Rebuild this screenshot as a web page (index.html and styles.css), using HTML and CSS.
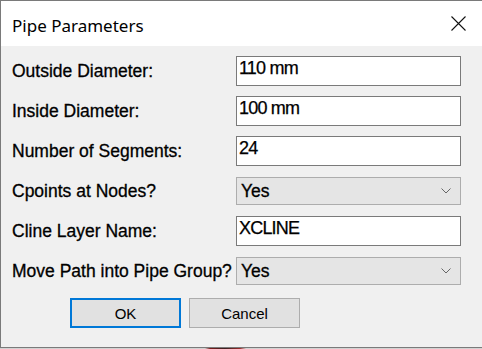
FILE: index.html
```html
<!DOCTYPE html>
<html lang="en">

<head>
    <meta charset="UTF-8">
    <meta name="viewport" content="width=device-width, initial-scale=1.0">
    <title>Pipe Parameters</title>
    <link rel="stylesheet" href="styles.css">
</head>

<body>
    <div class="window">
        <div class="titlebar">
            <span class="title">Pipe Parameters</span>
            <svg class="close" width="15" height="15" viewBox="0 0 15 15">
                <path d="M0.5 0.5 L14.5 14.5 M14.5 0.5 L0.5 14.5" stroke="#111" stroke-width="1.1" fill="none" />
            </svg>
        </div>
        <div class="content">
            <div class="form">
                <label>Outside Diameter:</label>
                <input class="field" type="text" value="110 mm">

                <label>Inside Diameter:</label>
                <input class="field" type="text" value="100 mm">

                <label>Number of Segments:</label>
                <input class="field" type="text" value="24">

                <label>Cpoints at Nodes?</label>
                <div class="combo">
                    <span>Yes</span>
                    <svg width="10" height="6" viewBox="0 0 10 6">
                        <path d="M0.5 0.5 L5 5 L9.5 0.5" stroke="#666" stroke-width="1" fill="none" />
                    </svg>
                </div>

                <label>Cline Layer Name:</label>
                <input class="field" type="text" value="XCLINE">

                <label>Move Path into Pipe Group?</label>
                <div class="combo">
                    <span>Yes</span>
                    <svg width="10" height="6" viewBox="0 0 10 6">
                        <path d="M0.5 0.5 L5 5 L9.5 0.5" stroke="#666" stroke-width="1" fill="none" />
                    </svg>
                </div>
            </div>
            <div class="buttons">
                <button class="btn btn-default">OK</button>
                <button class="btn">Cancel</button>
            </div>
        </div>
    </div>
    <div class="desk"></div>
</body>

</html>
```

FILE: styles.css
```css
body {
    margin: 0;
    background-color: #d2d2d2;
    font-family: "Liberation Sans", Arial, sans-serif;
}

.window {
    width: 481px;
    height: 346px;
    border: 1px solid #7a7a7a;
    border-right: 0;
    background-color: #f0f0f0;
    display: flex;
    flex-direction: column;
}

.titlebar {
    height: 45px;
    flex-shrink: 0;
    background-color: #fff;
    display: flex;
    align-items: center;
    justify-content: space-between;
    padding: 0 16px 0 11px;
}

.title {
    font-family: "Noto Sans", "Open Sans", sans-serif;
    font-size: 17px;
    color: #000;
    padding-top: 3px;
}

.close {
    display: block;
}

.content {
    padding: 10px 0 0 11px;
}

.form {
    display: grid;
    grid-template-columns: 224px 225px;
    grid-auto-rows: 30px;
    row-gap: 10px;
    align-items: center;
}

.form label {
    font-size: 17.5px;
    color: #000;
    -webkit-text-stroke: 0.3px #000;
}

.field {
    box-sizing: border-box;
    width: 225px;
    height: 30px;
    margin: 0;
    border: 1px solid #7a7a7a;
    background-color: #fff;
    padding: 0 2px 5px;
    font-family: "Liberation Sans", Arial, sans-serif;
    font-size: 18px;
    letter-spacing: -0.8px;
    color: #000;
    -webkit-text-stroke: 0.25px #000;
    outline: none;
}

.combo {
    box-sizing: border-box;
    height: 28px;
    border: 1px solid #adadad;
    background-color: #e5e5e5;
    display: flex;
    align-items: center;
    justify-content: space-between;
    padding: 0 9px 0 4px;
    font-size: 17.5px;
    color: #000;
    -webkit-text-stroke: 0.3px #000;
}

.combo svg {
    display: block;
}

.buttons {
    display: flex;
    gap: 8px;
    margin-top: 12px;
    padding-left: 58px;
}

.btn {
    box-sizing: border-box;
    width: 111px;
    height: 30px;
    margin: 0;
    border: 1px solid #adadad;
    background-color: #e1e1e1;
    font-family: "Liberation Sans", Arial, sans-serif;
    font-size: 15px;
    color: #000;
    padding: 0;
}

.btn-default {
    border: 2px solid #0078d7;
}

.desk {
    height: 1px;
    background: linear-gradient(90deg, #d2d2d2 205px, #7a1c1c 210px, #3a2020 225px, #9a2a2a 240px, #d2d2d2 246px);
}
```
